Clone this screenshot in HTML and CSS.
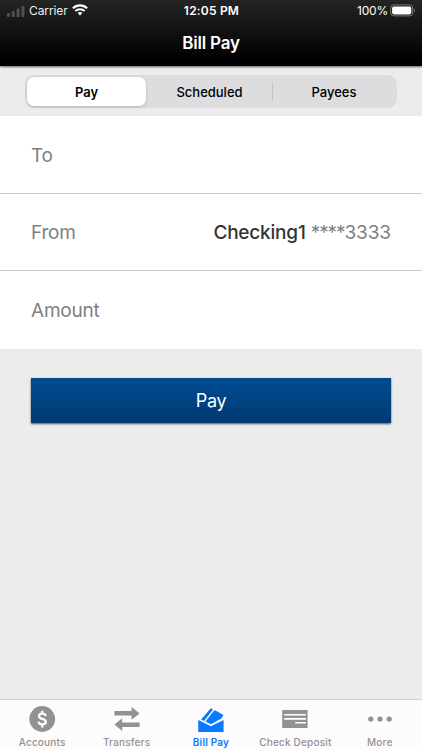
FILE: index.html
```
<!DOCTYPE html>
<html lang="en">
<head>
    <meta charset="UTF-8">
    <meta name="viewport" content="width=device-width, initial-scale=1.0">
    <title>Bill Pay</title>
    <link rel="stylesheet" href="styles.css">
</head>
<body>
    <header class="header">
        <div class="status-bar">
            <div class="status-left">
                <svg class="signal" width="18" height="12" viewBox="0 0 18 12" fill="#505050">
                    <rect x="0" y="8" width="3" height="4" rx="0.8"/>
                    <rect x="4.8" y="6" width="3" height="6" rx="0.8"/>
                    <rect x="9.6" y="3.5" width="3" height="8.5" rx="0.8"/>
                    <rect x="14.4" y="1" width="3" height="11" rx="0.8"/>
                </svg>
                <span class="carrier">Carrier</span>
                <svg class="wifi" width="16" height="12" viewBox="0 0 16 12" fill="none" stroke="#fff" stroke-width="2.1">
                    <path d="M0.9 4.3 A10.2 10.2 0 0 1 15.1 4.3"/>
                    <path d="M3.4 7.1 A6.6 6.6 0 0 1 12.6 7.1"/>
                    <path d="M8 11.5 L5.7 9.1 A3.3 3.3 0 0 1 10.3 9.1 Z" fill="#fff" stroke="none"/>
                </svg>
            </div>
            <div class="clock">12:05 PM</div>
            <div class="status-right">
                <span class="percent">100%</span>
                <svg width="26" height="13" viewBox="0 0 26 13">
                    <rect x="0.6" y="0.9" width="22.2" height="11" rx="3.2" fill="none" stroke="#777"/>
                    <rect x="2.1" y="2.4" width="19.2" height="8" rx="1.8" fill="#fff"/>
                    <path d="M24 4.6 C25.4 5.2 25.4 7.6 24 8.2 Z" fill="#777"/>
                </svg>
            </div>
        </div>
        <h1>Bill Pay</h1>
    </header>

    <div class="segments">
        <button class="segment active">Pay</button>
        <button class="segment">Scheduled</button>
        <button class="segment divided">Payees</button>
    </div>

    <div class="form">
        <div class="row"><span>To</span></div>
        <div class="row">
            <span>From</span>
            <span class="account"><b>Checking1</b> <span class="mask"><span class="stars">****</span>3333</span></span>
        </div>
        <div class="row"><span>Amount</span></div>
    </div>

    <button class="pay-button">Pay</button>

    <nav class="tab-bar">
        <a class="tab">
            <svg width="28" height="28" viewBox="0 0 28 28">
                <circle cx="14.2" cy="14" r="12.9" fill="#929292"/>
                <path d="M17.7 10.9 C17.3 9.2 16.1 8.7 14.3 8.7 C12.3 8.7 11 9.7 11 11.2 C11 12.9 12.4 13.4 14.3 13.9 C16.4 14.4 17.8 15.2 17.8 16.8 C17.8 18.5 16.3 19.4 14.3 19.4 C12.2 19.4 10.9 18.6 10.5 16.8 M14.3 5.8 V9 M14.3 19.2 V22.4" fill="none" stroke="#fff" stroke-width="2.3"/>
            </svg>
            <span>Accounts</span>
        </a>
        <a class="tab">
            <svg width="28" height="28" viewBox="0 0 28 28" fill="#929292">
                <path d="M1.4 6.1 H18.6 V2 L26.6 8.4 L18.6 14.7 V10.6 H1.4 Z"/>
                <path d="M26.6 17.4 H9.2 V13.3 L1.4 19.6 L9.2 26 V21.9 H26.6 Z"/>
            </svg>
            <span>Transfers</span>
        </a>
        <a class="tab active">
            <svg width="28" height="28" viewBox="0 0 28 28" fill="#087aff">
                <path d="M4.1 14.5 L13.3 3.8 Q14 3.1 14.8 3.6 L16 4.4 L7.1 16 Z"/>
                <path d="M8.5 16.6 L16.5 6.2 Q17.3 5.2 18.4 5.6 L25.6 9.5 Q26.8 10.2 25.8 11.3 L24.4 13.5 L14 19.2 Z"/>
                <path d="M1.2 15.1 L14 21.2 L26.6 15.1 V27 H1.2 Z"/>
            </svg>
            <span>Bill Pay</span>
        </a>
        <a class="tab">
            <svg width="28" height="28" viewBox="0 0 28 28">
                <path d="M1.2 5 H26.6 V23 H1.2 Z" fill="#929292"/>
                <path d="M3.2 9.8 H25 M3.2 13.9 H25 M14.2 17.8 H25" stroke="#fff" stroke-width="1.6"/>
            </svg>
            <span>Check Deposit</span>
        </a>
        <a class="tab">
            <svg width="28" height="28" viewBox="0 0 28 28" fill="#929292">
                <circle cx="4.8" cy="14" r="2.6"/>
                <circle cx="14" cy="14" r="2.6"/>
                <circle cx="23.2" cy="14" r="2.6"/>
            </svg>
            <span>More</span>
        </a>
    </nav>
</body>
</html>
```
FILE: styles.css
```
* {
    box-sizing: border-box;
}

body {
    margin: 0;
    height: 750px;
    display: flex;
    flex-direction: column;
    background-color: #ececec;
    font-family: Inter, "Liberation Sans", sans-serif;
    overflow: hidden;
}

button {
    border: none;
    padding: 0;
    font-family: inherit;
    cursor: pointer;
}

svg {
    display: block;
}

.header {
    height: 66px;
    background: linear-gradient(#242424, #000 92%);
    color: #fff;
    box-shadow: 0 1px 2px rgba(0, 0, 0, 0.6);
}

.status-bar {
    height: 21px;
    display: grid;
    grid-template-columns: 1fr auto 1fr;
    align-items: center;
    padding: 0 6px 0 7px;
    font-size: 12px;
}

.status-left,
.status-right {
    display: flex;
    align-items: center;
}

.status-right {
    justify-content: flex-end;
    gap: 2px;
}

.signal {
    margin-right: 4px;
}

.wifi {
    margin-left: 4px;
    margin-bottom: 1px;
}

.carrier {
    color: #eee;
    letter-spacing: -0.1px;
}

.clock {
    font-weight: 600;
    letter-spacing: 0.2px;
}

.percent {
    letter-spacing: -0.2px;
}

h1 {
    margin: 0;
    text-align: center;
    font-size: 17px;
    line-height: 44px;
    font-weight: 600;
    letter-spacing: -0.2px;
}

.segments {
    display: flex;
    height: 33px;
    margin: 9px 25px 8px;
    padding: 2px;
    border-radius: 9px;
    background-color: #dddde0;
}

.segment {
    flex: 1;
    margin-right: 3px;
    border-radius: 7px;
    background: none;
    color: #000;
    font-size: 13px;
    font-weight: 500;
}

.segment.active {
    flex: 0 0 119px;
    margin-right: 4px;
    background-color: #fff;
    font-weight: 600;
    box-shadow: 0 1px 3px rgba(0, 0, 0, 0.2);
}

.segment.divided {
    flex: 0 0 123px;
    margin: 5px 0;
    border-left: 1px solid #c6c6ca;
    border-radius: 0;
}

.form {
    background-color: #fff;
}

.row {
    display: flex;
    justify-content: space-between;
    align-items: center;
    height: 77px;
    padding: 1px 31px 0;
    color: #808080;
    font-size: 19px;
    letter-spacing: -0.2px;
}

.row + .row {
    border-top: 1px solid #ccc;
}

.row:last-child {
    height: 79px;
}

.account b {
    color: #333;
    font-weight: 500;
}

.mask {
    letter-spacing: -0.1px;
}

.stars {
    letter-spacing: -1.1px;
}

.pay-button {
    height: 45px;
    margin: 29px 31px 0;
    background: linear-gradient(#004b91, #003a73);
    color: #fff;
    font-size: 18px;
    letter-spacing: -0.4px;
    box-shadow: 0 1px 2px rgba(0, 20, 60, 0.7);
}

.tab-bar {
    display: grid;
    grid-template-columns: repeat(5, 1fr);
    height: 51px;
    margin-top: auto;
    border-top: 1px solid #d2d2d2;
    background-color: #fdfbfc;
}

.tab {
    display: flex;
    flex-direction: column;
    align-items: center;
    padding-top: 5px;
    color: #929292;
    font-size: 10px;
    font-weight: 500;
    line-height: 18px;
    letter-spacing: 0.2px;
    white-space: nowrap;
}

.tab.active {
    color: #087aff;
    font-weight: 600;
}
```
